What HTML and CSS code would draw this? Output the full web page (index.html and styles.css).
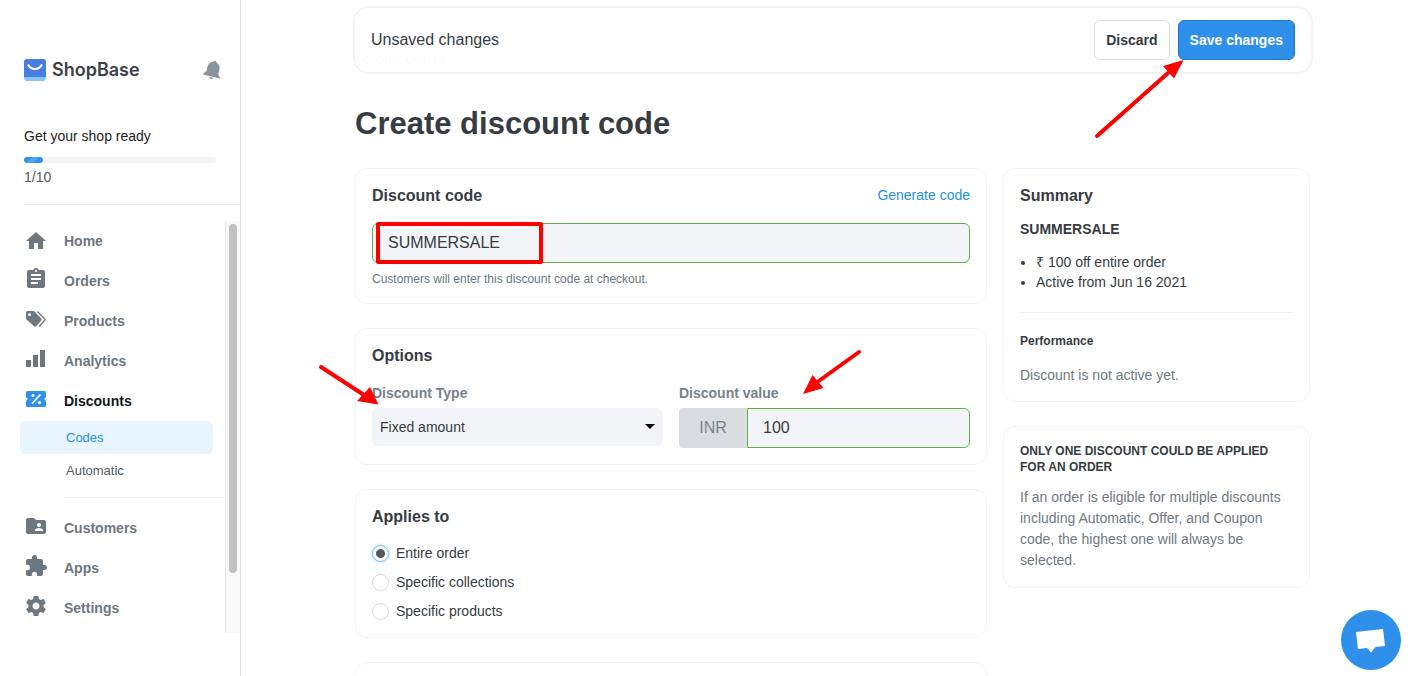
FILE: index.html
```html
<!DOCTYPE html>
<html lang="en">
<head>
<meta charset="utf-8">
<title>Create discount code</title>
<link rel="stylesheet" href="styles.css">
</head>
<body>
<aside class="sidebar">
  <div class="brand">
    <svg class="brand-mark" viewBox="0 0 22 22" aria-hidden="true">
      <rect y="4" width="22" height="18" rx="3" fill="#86c5fa"/>
      <path d="M3 0h16a3 3 0 0 1 3 3v15H0V3a3 3 0 0 1 3-3z" fill="#4a7de0"/>
      <path d="M4 5.500c3 6 11 6 14 0" fill="none" stroke="#fff" stroke-width="2.200"/>
    </svg>
    <span class="brand-name">ShopBase</span>
    <button class="bell" aria-label="Notifications">
      <svg viewBox="0 0 18 18" aria-hidden="true"><g transform="rotate(14 9 9)" fill="#8b949b"><path d="M9 .5c.9 0 1.400.6 1.400 1.300C13.200 2.600 14.500 4.800 14.500 7.500v4l2.200 2.500v1H1.300v-1l2.200-2.500v-4c0-2.700 1.300-4.900 4.100-5.700C7.600 1.100 8.100.5 9 .5z"/><path d="M7.300 15.800h3.400a1.700 1.500 0 0 1-3.400 0z"/></g></svg>
    </button>
  </div>
  <section class="setup">
    <p class="setup-title">Get your shop ready</p>
    <div class="progress"><div class="progress-fill" style="width:10%"></div></div>
    <p class="setup-count">1/10</p>
  </section>
  <div class="nav-scroll">
    <nav class="nav">
      <a class="nav-item" href="#"><svg class="home-icon" viewBox="0 0 24 24"><path d="M10 20v-6h4v6h5v-8h3L12 3 2 12h3v8z"/></svg>Home</a>
      <a class="nav-item" href="#"><svg viewBox="0 0 24 24"><path d="M19 3h-4.180C14.400 1.840 13.300 1 12 1s-2.400.84-2.820 2H5c-1.100 0-2 .9-2 2v14c0 1.100.9 2 2 2h14c1.100 0 2-.9 2-2V5c0-1.100-.9-2-2-2zm-7 0c.55 0 1 .45 1 1s-.45 1-1 1-1-.45-1-1 .45-1 1-1zm2 14H7v-2h7v2zm3-4H7v-2h10v2zm0-4H7V7h10v2z"/></svg>Orders</a>
      <a class="nav-item" href="#"><svg viewBox="0 0 24 24"><path fill-rule="evenodd" d="M3.500 4H9q.8 0 1.400.6l6.800 6.800q1 1 0 2l-5.100 5.800q-1 1-2 0L2.600 12.500Q2 11.900 2 11V5.500Q2 4 3.500 4zM5.500 6a1.500 1.500 0 1 0 0 3 1.500 1.500 0 0 0 0-3z"/><path d="M13.500 4.500l7.200 7.200q.8.800 0 1.600L15.300 19.500" fill="none" stroke="currentColor" stroke-width="1.300"/></svg>Products</a>
      <a class="nav-item" href="#"><svg viewBox="0 0 24 24"><path d="M2 13h5v7H2zM9 8h5v12H9zM16 3h5v17h-5z"/></svg>Analytics</a>
      <a class="nav-item active" href="#"><svg viewBox="0 0 24 24"><path fill="#2f90ec" d="M3.500 4h17A1.500 1.500 0 0 1 22 5.500v5a1.500 1.500 0 0 0 0 3v5a1.500 1.500 0 0 1-1.500 1.500h-17A1.500 1.500 0 0 1 2 18.500v-5a1.500 1.500 0 0 0 0-3v-5A1.500 1.500 0 0 1 3.500 4z"/><path d="M8 16.500l8.500-9" stroke="#fff" stroke-width="1.800"/><circle cx="9" cy="8.500" r="1.600" fill="#fff"/><circle cx="15.500" cy="15.500" r="1.600" fill="#fff"/></svg>Discounts</a>
      <div class="subnav">
        <a class="sub-item current" href="#">Codes</a>
        <a class="sub-item" href="#">Automatic</a>
      </div>
      <a class="nav-item" href="#"><svg viewBox="0 0 24 24"><path d="M20 6h-8l-2-2H4c-1.100 0-2 .9-2 2v12c0 1.100.9 2 2 2h16c1.100 0 2-.9 2-2V8c0-1.100-.9-2-2-2zm-5 3c1.100 0 2 .9 2 2s-.9 2-2 2-2-.9-2-2 .9-2 2-2zm4 8h-8v-1c0-1.330 2.670-2 4-2s4 .67 4 2v1z"/></svg>Customers</a>
      <a class="nav-item" href="#"><svg viewBox="0 0 24 24"><path d="M20.500 11H19V7c0-1.100-.9-2-2-2h-4V3.500C13 2.120 11.880 1 10.500 1S8 2.120 8 3.500V5H4c-1.100 0-1.990.9-1.990 2v3.800H3.500c1.490 0 2.700 1.210 2.700 2.700s-1.210 2.700-2.700 2.700H2V20c0 1.100.9 2 2 2h3.800v-1.500c0-1.490 1.210-2.700 2.700-2.700 1.490 0 2.700 1.210 2.700 2.700V22H17c1.100 0 2-.9 2-2v-4h1.500c1.380 0 2.500-1.120 2.500-2.500S21.880 11 20.500 11z"/></svg>Apps</a>
      <a class="nav-item" href="#"><svg viewBox="0 0 24 24"><path d="M19.430 12.980c.04-.32.070-.64.070-.98s-.03-.66-.07-.98l2.110-1.650c.19-.15.240-.42.120-.64l-2-3.460c-.12-.22-.39-.3-.61-.22l-2.490 1c-.52-.4-1.080-.73-1.690-.98l-.38-2.650C14.460 2.180 14.250 2 14 2h-4c-.25 0-.46.18-.49.42l-.38 2.650c-.61.25-1.170.59-1.690.98l-2.490-1c-.23-.09-.49 0-.61.22l-2 3.460c-.13.22-.07.49.12.64l2.110 1.650c-.04.32-.07.650-.07.980s.03.66.07.98l-2.110 1.650c-.19.15-.24.42-.12.640l2 3.460c.12.22.39.3.61.22l2.490-1c.52.4 1.080.73 1.690.98l.38 2.650c.03.24.24.42.49.42h4c.25 0 .46-.18.49-.42l.38-2.650c.61-.25 1.170-.59 1.690-.98l2.490 1c.23.09.49 0 .61-.22l2-3.460c.12-.22.07-.49-.12-.64l-2.110-1.650zM12 15.500c-1.930 0-3.500-1.570-3.500-3.500s1.570-3.500 3.500-3.500 3.500 1.570 3.500 3.500-1.570 3.500-3.500 3.500z"/></svg>Settings</a>
    </nav>
    <div class="track" aria-hidden="true"><div class="thumb"></div></div>
  </div>
</aside>

<main class="page">
  <a class="breadcrumb" href="#"><svg viewBox="0 0 6 10" aria-hidden="true"><path d="M5 1L1 5l4 4" fill="none" stroke="currentColor" stroke-width="2"/></svg>DISCOUNTS</a>
  <div class="savebar">
    <span class="savebar-text">Unsaved changes</span>
    <button class="btn">Discard</button>
    <button class="btn primary">Save changes</button>
    <svg class="arrow arrow-save" viewBox="0 0 90 80" aria-hidden="true"><path d="M3 77L74 14" stroke="#fe0000" stroke-width="4" stroke-linecap="round"/><path d="M89.500 1L69 7l11 12.500z" fill="#fe0000"/></svg>
  </div>
  <h1 class="title">Create discount code</h1>

  <div class="columns">
    <div class="column">
      <section class="card">
        <div class="card-head">
          <h2><label for="code">Discount code</label></h2>
          <a class="link" href="#">Generate code</a>
        </div>
        <div class="code-field">
          <input class="field" id="code" type="text" value="SUMMERSALE">
          <div class="highlight" aria-hidden="true"></div>
        </div>
        <p class="help">Customers will enter this discount code at checkout.</p>
      </section>

      <section class="card">
        <h2>Options</h2>
        <div class="options">
          <div class="option">
            <label for="type">Discount Type</label>
            <div class="select-wrap">
              <select id="type"><option>Fixed amount</option></select>
              <svg class="caret" viewBox="0 0 10 5" aria-hidden="true"><path d="M0 0h10L5 5z"/></svg>
            </div>
          </div>
          <div class="option">
            <label for="value">Discount value</label>
            <div class="value-group">
              <span class="prefix">INR</span>
              <input class="field" id="value" type="text" value="100">
            </div>
          </div>
        </div>
        <svg class="arrow arrow-type" viewBox="0 0 62 42" aria-hidden="true"><path d="M3 3L46 31" stroke="#fe0000" stroke-width="4" stroke-linecap="round"/><path d="M60.500 40.500L52 23 39 37z" fill="#fe0000"/></svg>
        <svg class="arrow arrow-value" viewBox="0 0 60 46" aria-hidden="true"><path d="M57 3L14 34" stroke="#fe0000" stroke-width="4" stroke-linecap="round"/><path d="M1 45L10.500 26l11 13z" fill="#fe0000"/></svg>
      </section>

      <section class="card">
        <h2>Applies to</h2>
        <div class="radios">
          <label><input type="radio" name="applies" checked>Entire order</label>
          <label><input type="radio" name="applies">Specific collections</label>
          <label><input type="radio" name="applies">Specific products</label>
        </div>
      </section>

      <section class="card next-card"></section>
    </div>

    <div class="column">
      <section class="card">
        <h2>Summary</h2>
        <p class="summary-code">SUMMERSALE</p>
        <ul class="summary-list">
          <li>₹ 100 off entire order</li>
          <li>Active from Jun 16 2021</li>
        </ul>
        <h3 class="performance">Performance</h3>
        <p class="muted">Discount is not active yet.</p>
      </section>
      <section class="card">
        <h3>ONLY ONE DISCOUNT COULD BE APPLIED FOR AN ORDER</h3>
        <p class="note">If an order is eligible for multiple discounts including Automatic, Offer, and Coupon code, the highest one will always be selected.</p>
      </section>
    </div>
  </div>
</main>

<button class="chat" aria-label="Open chat">
  <svg viewBox="0 0 30 26" aria-hidden="true"><path d="M0 5l27-3 2 17-9.500 1L15 25.500 11 21l-9 1z" fill="#fff"/></svg>
</button>
</body>
</html>
```

FILE: styles.css
```css
* { box-sizing: border-box; }

body {
  margin: 0;
  height: 100vh;
  display: flex;
  overflow: hidden;
  background: #fff;
  color: #363c42;
  font: 14px/20px "Liberation Sans", Arial, sans-serif;
}

h1, h2, h3, p, ul { margin: 0; padding: 0; }
h2 { font-size: 16px; line-height: 22px; }
h3 { font-size: 12px; line-height: 16px; }
a { color: inherit; text-decoration: none; }
button, input, select { font-family: inherit; margin: 0; }

/* Sidebar */
.sidebar {
  flex: 0 0 241px;
  border-right: 1px solid #e3e4ea;
  padding-top: 56px;
}
.brand {
  display: flex;
  align-items: center;
  height: 28px;
  padding: 0 17px 0 24px;
}
.brand-mark { width: 22px; height: 22px; }
.brand-name {
  flex: 1;
  margin-left: 6px;
  font: 600 18px/28px Inter, sans-serif;
  color: #3c4248;
}
.bell { border: 0; padding: 0; background: none; height: 20px; }
.bell svg { display: block; width: 20px; height: 20px; }
.setup {
  margin-left: 24px;
  padding: 42px 24px 17px 0;
  border-bottom: 1px solid #ecedf0;
}
.setup-title { color: #1b1d21; }
.progress {
  height: 6px;
  margin: 11px 0 4px;
  border-radius: 3px;
  background: #f3f4f6;
}
.progress-fill {
  height: 6px;
  border-radius: 3px;
  background: repeating-linear-gradient(135deg, #2f90ec 0 6px, #4ea2ef 6px 11px);
}
.setup-count { color: #555b60; }
.nav-scroll { display: flex; margin-top: 16px; }
.nav { flex: 1; padding-bottom: 5px; }
.nav-item {
  display: flex;
  align-items: center;
  gap: 16px;
  height: 40px;
  padding-left: 24px;
  font-weight: bold;
  color: #6c777f;
}
.nav-item svg {
  width: 24px;
  height: 24px;
  margin-bottom: 4px;
  fill: currentColor;
}
.nav-item .home-icon { margin-bottom: 0; }
.nav-item.active { color: #16181c; }
.subnav {
  margin-bottom: 10px;
  padding: 0 12px 11px 20px;
  background: linear-gradient(#f0f1f3, #f0f1f3) 64px 100% / 100% 1px no-repeat;
}
.sub-item {
  display: block;
  padding-left: 46px;
  border-radius: 6px;
  font-size: 13px;
  line-height: 33px;
  color: #555b60;
}
.sub-item.current { background: #e8f5fe; color: #2490ea; }
.track {
  flex: 0 0 15px;
  padding: 3px;
  border-left: 1px solid #e8e8e8;
  background: #fafafa;
}
.thumb { width: 8px; height: 86%; border-radius: 4px; background: #c1c1c1; }

/* Page */
.page {
  flex: 1;
  position: relative;
  min-width: 0;
  padding: 50px 107px 0 114px;
}
.breadcrumb {
  display: flex;
  align-items: center;
  gap: 8px;
  padding-left: 7px;
  font-size: 12px;
  font-weight: bold;
  line-height: 20px;
  color: #c4c8cc;
}
.breadcrumb svg { width: 6px; height: 10px; }
.savebar {
  position: absolute;
  top: 6px;
  left: 112px;
  right: 104px;
  display: flex;
  align-items: center;
  gap: 8px;
  height: 68px;
  padding: 0 16px;
  border: 2px solid #f4f4f5;
  border-radius: 16px;
  background: rgba(255, 255, 255, 0.93);
}
.savebar-text { flex: 1; font-size: 16px; }
.btn {
  height: 40px;
  padding: 0 11px;
  border: 1px solid #d9dcdf;
  border-radius: 6px;
  background: #fff;
  color: #363c42;
  font-size: 14px;
  font-weight: bold;
}
.btn.primary { border-color: #2179cb; background: #2f90ec; color: #fff; }
.title { margin: 34px 0 24px; font-size: 31px; line-height: 40px; }
.columns {
  display: grid;
  grid-template-columns: minmax(0, 632fr) minmax(0, 307fr);
  gap: 16px;
  align-items: start;
}
.column { display: flex; flex-direction: column; gap: 24px; }
.card {
  position: relative;
  padding: 16px;
  border: 1px solid #f4f4f6;
  border-radius: 12px;
}
.next-card { height: 136px; }

/* Discount code */
.card-head { display: flex; justify-content: space-between; }
.link { color: #2490ea; }
.code-field { position: relative; margin-top: 16px; }
.field {
  display: block;
  width: 100%;
  height: 40px;
  padding: 0 15px;
  border: 1px solid #5fb441;
  border-radius: 6px;
  background: #f3f4f7;
  color: #363c42;
  font-size: 16px;
}
.highlight {
  position: absolute;
  top: -1px;
  left: 4px;
  width: 167px;
  height: 42px;
  border: 4px solid #fe0000;
  border-radius: 2px;
}
.help { margin-top: 8px; font-size: 12px; line-height: 16px; color: #6c777f; }

/* Options */
.options {
  display: grid;
  grid-template-columns: 1fr 1fr;
  gap: 16px;
  margin-top: 16px;
}
.option label {
  display: block;
  margin-bottom: 5px;
  font-weight: bold;
  color: #77828a;
}
.select-wrap { position: relative; }
select {
  appearance: none;
  display: block;
  width: 100%;
  height: 38px;
  padding: 0 8px;
  border: 0;
  border-radius: 6px;
  background: #f3f4f7;
  color: #363c42;
  font-size: 14px;
}
.caret {
  position: absolute;
  top: 16px;
  right: 8px;
  width: 10px;
  height: 5px;
  pointer-events: none;
}
.value-group { display: flex; }
.prefix {
  flex: 0 0 68px;
  border-radius: 4px 0 0 4px;
  background: #d9dce0;
  color: #7b838a;
  font-size: 16px;
  line-height: 40px;
  text-align: center;
}
.value-group .field { flex: 1; min-width: 0; border-radius: 0 6px 6px 0; }

/* Radios */
.radios { display: flex; flex-direction: column; gap: 9px; margin-top: 15px; }
.radios label { display: flex; align-items: center; gap: 7px; }
.radios input {
  appearance: none;
  width: 17px;
  height: 17px;
  border: 1px solid #d5d8dc;
  border-radius: 50%;
  background: #fff;
}
.radios input:checked {
  border-color: #6db9f5;
  background: radial-gradient(circle, #53585c 4px, #fff 5px);
  box-shadow: 0 0 2px 1px #c5e6fd;
}

/* Summary */
.summary-code { margin-top: 12px; font-weight: bold; }
.summary-list {
  margin-top: 13px;
  padding: 0 0 20px 16px;
  border-bottom: 1px solid #f0f1f3;
}
.performance { margin: 20px 0 16px; }
.muted, .note { color: #6f7a82; }
.note { margin-top: 12px; line-height: 21px; }

/* Pointers and chat */
.arrow { position: absolute; fill: none; pointer-events: none; }
.arrow-save { top: 51px; right: 127px; width: 90px; height: 80px; }
.arrow-type { top: 35px; left: -38px; width: 62px; height: 42px; }
.arrow-value { top: 20px; right: 124px; width: 60px; height: 46px; }
.chat {
  position: fixed;
  right: 16px;
  bottom: 6px;
  display: grid;
  place-items: center;
  width: 60px;
  height: 60px;
  padding: 0;
  border: 0;
  border-radius: 50%;
  background: #2f90ec;
}
.chat svg { width: 30px; height: 26px; }
```
